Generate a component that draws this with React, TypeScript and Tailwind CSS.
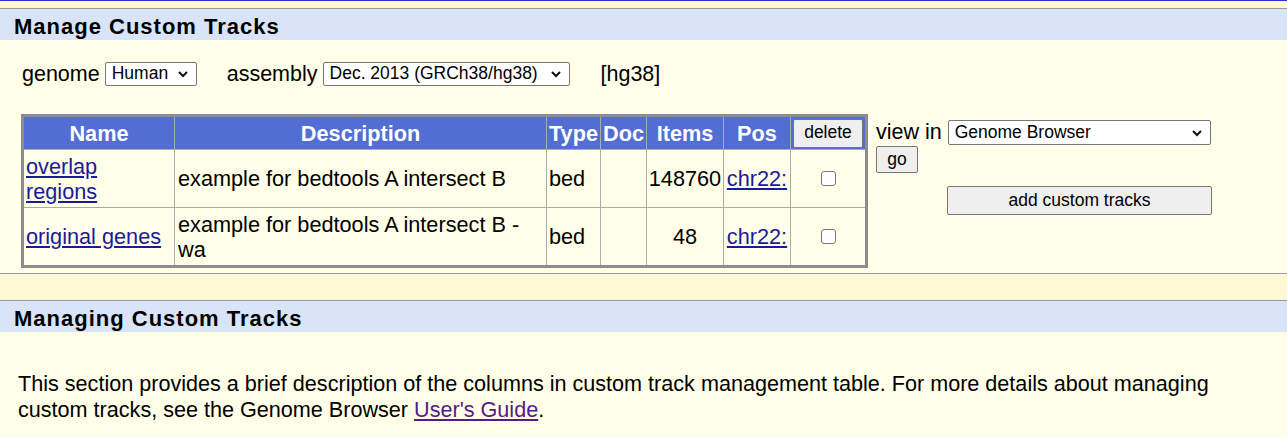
import React from 'react';

function Chevron() {
  return (
    <svg width="12" height="8" viewBox="0 0 12 8" className="shrink-0">
      <path d="M2 2l4 4 4-4" fill="none" stroke="#111" strokeWidth="2" />
    </svg>
  );
}

function Select({ label, className }: { label: string; className: string }) {
  return (
    <div className={`flex items-center justify-between bg-white border border-[#767676] rounded-[2px] pl-[6px] pr-[7px] text-[17.5px] leading-none ${className}`}>
      <span>{label}</span>
      <Chevron />
    </div>
  );
}

function Btn({ label, className }: { label: string; className: string }) {
  return (
    <div className={`flex items-center justify-center bg-[#efefef] border border-[#767676] rounded-[2px] text-[17.5px] leading-none ${className}`}>
      {label}
    </div>
  );
}

function Box() {
  return <div className="w-[15px] h-[15px] rounded-[3px] border border-[#767676] bg-white" />;
}

function SectionHeader({ title }: { title: string }) {
  return (
    <div className="border-t border-[#9a9a9a] bg-[#d9e4f8] h-[32px] flex items-center pl-[14px] pt-[3px]">
      <h2 className="text-[22px] font-bold tracking-[1px] text-black">{title}</h2>
    </div>
  );
}

const link = 'text-[#1a1a9c] underline underline-offset-2';

export default function App() {
  return (
    <div className="min-h-[438px] bg-[#fffee8] text-black font-['Liberation_Sans',Arial,sans-serif]">
      <div className="h-px bg-[#1f33d6]" />
      <div className="h-[7px] bg-[#fff8d4]" />
      <SectionHeader title="Manage Custom Tracks" />

      <div className="flex items-center h-[24px] mt-[22px] pl-[22px] text-[21.5px]">
        <span>genome</span>
        <Select label="Human" className="ml-[5px] w-[92px] h-[24px]" />
        <span className="ml-[30px]">assembly</span>
        <Select label="Dec. 2013 (GRCh38/hg38)" className="ml-[5px] w-[247px] h-[24px]" />
        <span className="ml-[31px]">[hg38]</span>
      </div>

      <div className="flex items-start mt-[28px] pl-[21px]">
        <div className="border-[3px] border-[#8c8c8c] bg-[#ababab]">
          <div className="grid grid-cols-[150px_371px_53px_45px_76px_66px_74px] grid-rows-[32px_57px_57px] gap-px text-[21.7px] leading-[25px]">
            <div className="bg-[#536ed3] text-white font-bold flex items-center justify-center">Name</div>
            <div className="bg-[#536ed3] text-white font-bold flex items-center justify-center">Description</div>
            <div className="bg-[#536ed3] text-white font-bold flex items-center justify-center">Type</div>
            <div className="bg-[#536ed3] text-white font-bold flex items-center justify-center">Doc</div>
            <div className="bg-[#536ed3] text-white font-bold flex items-center justify-center">Items</div>
            <div className="bg-[#536ed3] text-white font-bold flex items-center justify-center">Pos</div>
            <div className="bg-[#536ed3] flex items-center justify-center">
              <Btn label="delete" className="w-[70px] h-[29px]" />
            </div>

            <div className="bg-[#fffee8] flex items-center pl-[2px]">
              <a className={link}>overlap<br />regions</a>
            </div>
            <div className="bg-[#fffee8] flex items-center pl-[3px]">example for bedtools A intersect B</div>
            <div className="bg-[#fffee8] flex items-center pl-[2px]">bed</div>
            <div className="bg-[#fffee8]" />
            <div className="bg-[#fffee8] flex items-center justify-center">148760</div>
            <div className="bg-[#fffee8] flex items-center justify-center"><a className={link}>chr22:</a></div>
            <div className="bg-[#fffee8] flex items-center justify-center"><Box /></div>

            <div className="bg-[#fffee8] flex items-center pl-[2px]">
              <a className={link}>original genes</a>
            </div>
            <div className="bg-[#fffee8] flex items-center pl-[3px]">example for bedtools A intersect B -<br />wa</div>
            <div className="bg-[#fffee8] flex items-center pl-[2px]">bed</div>
            <div className="bg-[#fffee8]" />
            <div className="bg-[#fffee8] flex items-center justify-center">48</div>
            <div className="bg-[#fffee8] flex items-center justify-center"><a className={link}>chr22:</a></div>
            <div className="bg-[#fffee8] flex items-center justify-center"><Box /></div>
          </div>
        </div>

        <div className="ml-[8px] flex flex-col">
          <div className="flex items-center mt-[6px]">
            <span className="text-[21.5px] leading-none">view in</span>
            <Select label="Genome Browser" className="ml-[6px] w-[263px] h-[25px]" />
          </div>
          <Btn label="go" className="w-[42px] h-[27px] mt-px" />
          <Btn label="add custom tracks" className="ml-[71px] w-[265px] h-[29px] mt-[13px]" />
        </div>
      </div>

      <div className="mt-[5px] border-t border-[#9a9a9a] h-[27px] bg-[#fff8d4]" />
      <SectionHeader title="Managing Custom Tracks" />

      <p className="mt-[39px] pl-[18px] text-[21.6px] leading-[26px]">
        This section provides a brief description of the columns in custom track management table. For more details about managing
        <br />
        custom tracks, see the Genome Browser <a className="text-[#551a8b] underline underline-offset-2">User's Guide</a>.
      </p>
    </div>
  );
}
